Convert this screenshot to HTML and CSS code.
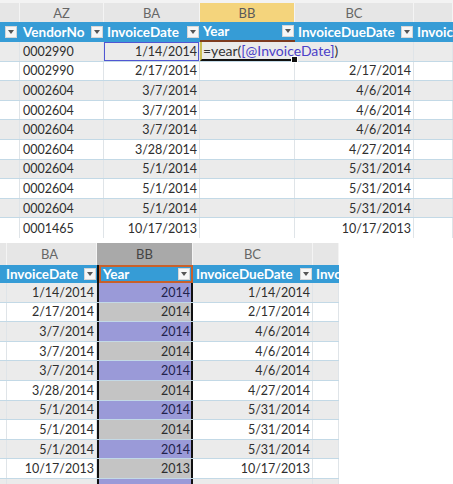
FILE: index.html
```html
<!DOCTYPE html>
<html lang="en">
<head>
    <meta charset="UTF-8">
    <title>year formula</title>
    <link rel="stylesheet" href="styles.css">
</head>
<body>
    <div class="sheet top">
        <div class="row letters">
            <div class="c"></div>
            <div class="c">AZ</div>
            <div class="c">BA</div>
            <div class="c act">BB</div>
            <div class="c">BC</div>
            <div class="c"></div>
        </div>
        <div class="row head">
            <div class="c end"><span class="dd"></span></div>
            <div class="c">VendorNo<span class="dd"></span></div>
            <div class="c">InvoiceDate<span class="dd"></span></div>
            <div class="c yr">Year<span class="dd"></span></div>
            <div class="c">InvoiceDueDate<span class="dd"></span></div>
            <div class="c">Invoic</div>
        </div>
        <div class="row band">
            <div class="c"></div>
            <div class="c">0002990</div>
            <div class="c r ref">1/14/2014</div>
            <div class="c fx">=year(<span class="tok">[@InvoiceDate]</span>)</div>
            <div class="c r nol"></div>
            <div class="c"></div>
        </div>
        <div class="row">
            <div class="c"></div><div class="c">0002990</div><div class="c r">2/17/2014</div><div class="c"></div><div class="c r">2/17/2014</div><div class="c"></div>
        </div>
        <div class="row band">
            <div class="c"></div><div class="c">0002604</div><div class="c r">3/7/2014</div><div class="c"></div><div class="c r">4/6/2014</div><div class="c"></div>
        </div>
        <div class="row">
            <div class="c"></div><div class="c">0002604</div><div class="c r">3/7/2014</div><div class="c"></div><div class="c r">4/6/2014</div><div class="c"></div>
        </div>
        <div class="row band">
            <div class="c"></div><div class="c">0002604</div><div class="c r">3/7/2014</div><div class="c"></div><div class="c r">4/6/2014</div><div class="c"></div>
        </div>
        <div class="row">
            <div class="c"></div><div class="c">0002604</div><div class="c r">3/28/2014</div><div class="c"></div><div class="c r">4/27/2014</div><div class="c"></div>
        </div>
        <div class="row band">
            <div class="c"></div><div class="c">0002604</div><div class="c r">5/1/2014</div><div class="c"></div><div class="c r">5/31/2014</div><div class="c"></div>
        </div>
        <div class="row">
            <div class="c"></div><div class="c">0002604</div><div class="c r">5/1/2014</div><div class="c"></div><div class="c r">5/31/2014</div><div class="c"></div>
        </div>
        <div class="row band">
            <div class="c"></div><div class="c">0002604</div><div class="c r">5/1/2014</div><div class="c"></div><div class="c r">5/31/2014</div><div class="c"></div>
        </div>
        <div class="row last">
            <div class="c"></div><div class="c">0001465</div><div class="c r">10/17/2013</div><div class="c"></div><div class="c r">10/17/2013</div><div class="c"></div>
        </div>
    </div>

    <div class="sheet bottom">
        <div class="row letters">
            <div class="c"></div>
            <div class="c">BA</div>
            <div class="c picked">BB</div>
            <div class="c">BC</div>
            <div class="c"></div>
        </div>
        <div class="row head">
            <div class="c"></div>
            <div class="c">InvoiceDate<span class="dd"></span></div>
            <div class="c sel yr2">Year<span class="dd"></span></div>
            <div class="c">InvoiceDueDate<span class="dd"></span></div>
            <div class="c">Invo</div>
        </div>
        <div class="row band">
            <div class="c"></div><div class="c r">1/14/2014</div><div class="c r sel">2014</div><div class="c r">1/14/2014</div><div class="c"></div>
        </div>
        <div class="row">
            <div class="c"></div><div class="c r">2/17/2014</div><div class="c r sel">2014</div><div class="c r">2/17/2014</div><div class="c"></div>
        </div>
        <div class="row band">
            <div class="c"></div><div class="c r">3/7/2014</div><div class="c r sel">2014</div><div class="c r">4/6/2014</div><div class="c"></div>
        </div>
        <div class="row">
            <div class="c"></div><div class="c r">3/7/2014</div><div class="c r sel">2014</div><div class="c r">4/6/2014</div><div class="c"></div>
        </div>
        <div class="row band">
            <div class="c"></div><div class="c r">3/7/2014</div><div class="c r sel">2014</div><div class="c r">4/6/2014</div><div class="c"></div>
        </div>
        <div class="row">
            <div class="c"></div><div class="c r">3/28/2014</div><div class="c r sel">2014</div><div class="c r">4/27/2014</div><div class="c"></div>
        </div>
        <div class="row band">
            <div class="c"></div><div class="c r">5/1/2014</div><div class="c r sel">2014</div><div class="c r">5/31/2014</div><div class="c"></div>
        </div>
        <div class="row">
            <div class="c"></div><div class="c r">5/1/2014</div><div class="c r sel">2014</div><div class="c r">5/31/2014</div><div class="c"></div>
        </div>
        <div class="row band">
            <div class="c"></div><div class="c r">5/1/2014</div><div class="c r sel">2014</div><div class="c r">5/31/2014</div><div class="c"></div>
        </div>
        <div class="row">
            <div class="c"></div><div class="c r">10/17/2013</div><div class="c r sel">2013</div><div class="c r">10/17/2013</div><div class="c"></div>
        </div>
        <div class="row band">
            <div class="c"></div><div class="c r"></div><div class="c r sel"></div><div class="c r"></div><div class="c"></div>
        </div>
    </div>
</body>
</html>
```

FILE: styles.css
```css
*{
    margin: 0;padding: 0;
    box-sizing: border-box;
}
body{
    background: #fff;
    font-family: Lato, "Liberation Sans", sans-serif;
    font-size: 12.5px;
    color: #2e2e2e;
    width: 453px;
    height: 484px;
    overflow: hidden;
}
.sheet{
    overflow: hidden;
}
.top{
    --cols: 20px 84px 96px 95px 119px 39px;
    width: 453px;
    height: 238px;
    padding-top: 3px;
    background: #f3f3f3;
}
.bottom{
    --cols: 3px 94px 96px 120px 26px;
    width: 339px;
    height: 243px;
    margin-top: 3px;
    padding-top: 2px;
    background: #fff;
}
.row{
    display: grid;
    grid-template-columns: var(--cols);
    height: 19.6px;
    background: #fff;
    border-bottom: 1px solid #c3d9e6;
}
.row.band{
    background: #ebebeb;
}
.row.last{
    border-bottom: none;
}
.c{
    display: flex;
    align-items: center;
    padding: 0 3px;
    white-space: nowrap;
    overflow: hidden;
    border-right: 1px solid #dfe4e8;
}
.r{
    justify-content: flex-end;
    padding-right: 2px;
}

/* column letters */
.row.letters{
    height: 19px;
    background: #e6e6e6;
    border-bottom: none;
    color: #666;
    font-size: 13px;
}
.bottom .row.letters{
    height: 22px;
}
.letters .c{
    justify-content: center;
    border-right: 1px solid #f4f4f4;
}
.letters .act{
    background: #f4d47c;
    color: #5a5a5a;
}
.letters .picked{
    background: #a9a9a9;
    color: #444;
}

/* table header */
.row.head{
    height: 20px;
    background: #369cd6;
    border-bottom: none;
    color: #fff;
    font-weight: bold;
    font-size: 13.5px;
}
.bottom .row.head{
    height: 18px;
}
.head .c{
    justify-content: space-between;
    border-right: none;
    padding-right: 1px;
}
.head .end{
    justify-content: flex-end;
    padding-right: 3px;
}
.dd{
    flex: none;
    width: 12px;
    height: 12px;
    background: #f6f6f6;
    border: 1px solid #d6d6d6;
    display: flex;
    align-items: center;
    justify-content: center;
}
.dd::after{
    content: "";
    border-left: 3.5px solid transparent;
    border-right: 3.5px solid transparent;
    border-top: 4px solid #555;
}
.head .yr{
    border-bottom: 2px solid #7d3b1f;
}

/* formula being typed */
.ref{
    box-shadow: inset 0 0 0 1px #5056d2;
}
.fx{
    position: relative;
    overflow: visible;
    padding-left: 1px;
    border-left: 2px solid #cbbd55;
    border-bottom: 2px solid #111;
    border-right: none;
    color: #333;
    font-size: 14px;
}
.fx::after{
    content: "";
    position: absolute;
    right: -3px;
    bottom: -4px;
    width: 5px;
    height: 5px;
    background: #111;
    border: 1px solid #fff;
}
.tok{
    color: #4a40c8;
}
.nol{
    border-left: none;
}

/* selected column */
.sel{
    border-left: 2px solid #111;
    border-right: 2px solid #111;
    background: #c4c4c4;
    padding-right: 1px;
}
.band .sel{
    background: #9a9ad8;
    color: #22224c;
}
.head .yr2{
    background: #369cd6;
    box-shadow: inset 0 0 0 2px #c8602a;
    padding-left: 4px;
    padding-right: 3px;
}
```
